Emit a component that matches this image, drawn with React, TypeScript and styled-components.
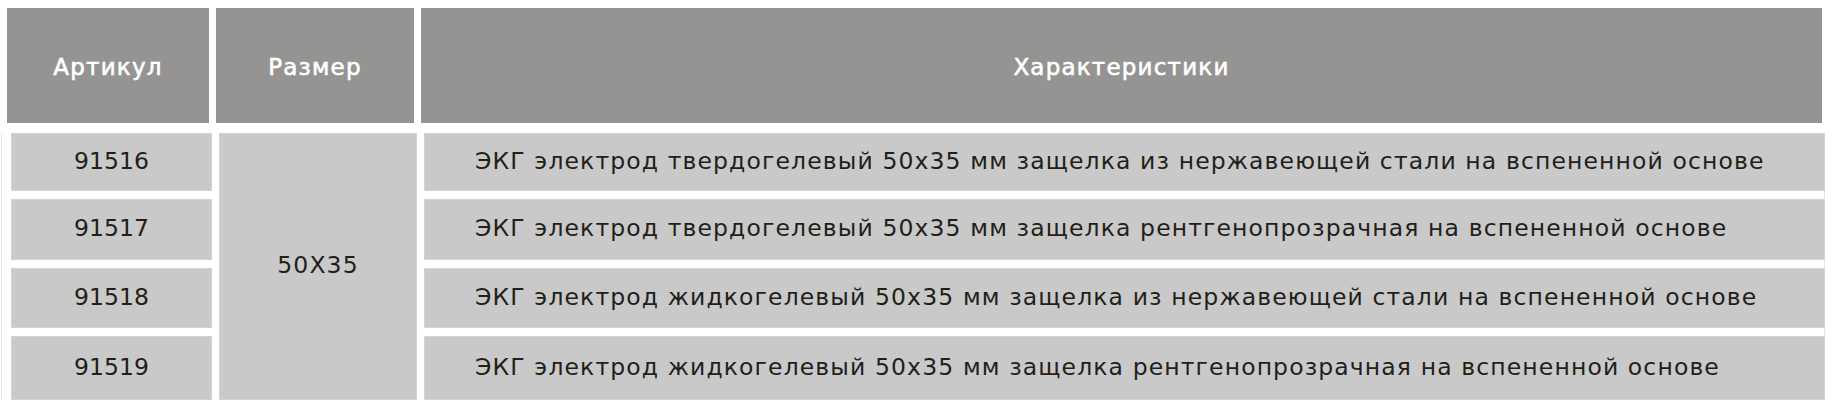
import React from "react";
import styled, { createGlobalStyle } from "styled-components";

const Global = createGlobalStyle`
  html, body { margin: 0; padding: 0; background: #ffffff; }
  body { font-family: "DejaVu Sans", "Noto Sans", sans-serif; }
`;

const Page = styled.div`
  width: 1833px;
  height: 410px;
  box-sizing: border-box;
  padding-top: 8px;
  display: flex;
  flex-direction: column;
  gap: 10px;
`;

const HeaderRow = styled.div`
  display: grid;
  grid-template-columns: 202px 198px 1401px;
  column-gap: 7px;
  padding-left: 7px;
  height: 115px;
`;

const HeadCell = styled.div`
  background: #959492;
  color: #ffffff;
  display: flex;
  align-items: center;
  justify-content: center;
  font-size: 23px;
  font-weight: 400;
  letter-spacing: 1.2px;
  padding-top: 2px;
  box-sizing: border-box;
  -webkit-text-stroke: 0.6px #ffffff;
`;

const Body = styled.div`
  display: grid;
  grid-template-columns: 201px 198px 1401px;
  grid-template-rows: 58px 61px 60px 64px;
  gap: 8px 7px;
  margin-left: 1px;
  padding-left: 9px;
  width: 1824px;
  box-sizing: border-box;
  border-left: 1px solid #e6e6e6;
  border-right: 1px solid #e6e6e6;
`;

const Cell = styled.div<{ $align?: "left" | "center"; $tight?: boolean }>`
  background: #c9c9c9;
  border: 1px solid #d4d4d4;
  box-sizing: border-box;
  color: #231e18;
  font-size: 23.5px;
  display: flex;
  align-items: center;
  justify-content: ${(p) => (p.$align === "left" ? "flex-start" : "center")};
  padding-left: ${(p) => (p.$align === "left" ? "50px" : "0")};
  padding-bottom: 3px;
  white-space: nowrap;
  letter-spacing: ${(p) => (p.$tight ? "0" : "1.12px")};
`;

const rows = [
  { code: "91516", text: "ЭКГ электрод твердогелевый 50x35 мм защелка из нержавеющей стали на вспененной основе" },
  { code: "91517", text: "ЭКГ электрод твердогелевый 50x35 мм защелка рентгенопрозрачная на вспененной основе" },
  { code: "91518", text: "ЭКГ электрод жидкогелевый 50x35 мм защелка из нержавеющей стали на вспененной основе" },
  { code: "91519", text: "ЭКГ электрод жидкогелевый 50x35 мм защелка рентгенопрозрачная на вспененной основе" },
];

export default function App() {
  return (
    <>
      <Global />
      <Page>
        <HeaderRow>
          <HeadCell>Артикул</HeadCell>
          <HeadCell>Размер</HeadCell>
          <HeadCell>Характеристики</HeadCell>
        </HeaderRow>
        <Body>
          {rows.map((r, i) => (
            <React.Fragment key={r.code}>
              <Cell $tight style={{ gridColumn: 1, gridRow: i + 1 }}>
                {r.code}
              </Cell>
              {i === 0 && (
                <Cell style={{ gridColumn: 2, gridRow: "1 / span 4" }}>50X35</Cell>
              )}
              <Cell $align="left" style={{ gridColumn: 3, gridRow: i + 1 }}>
                {r.text}
              </Cell>
            </React.Fragment>
          ))}
        </Body>
      </Page>
    </>
  );
}
